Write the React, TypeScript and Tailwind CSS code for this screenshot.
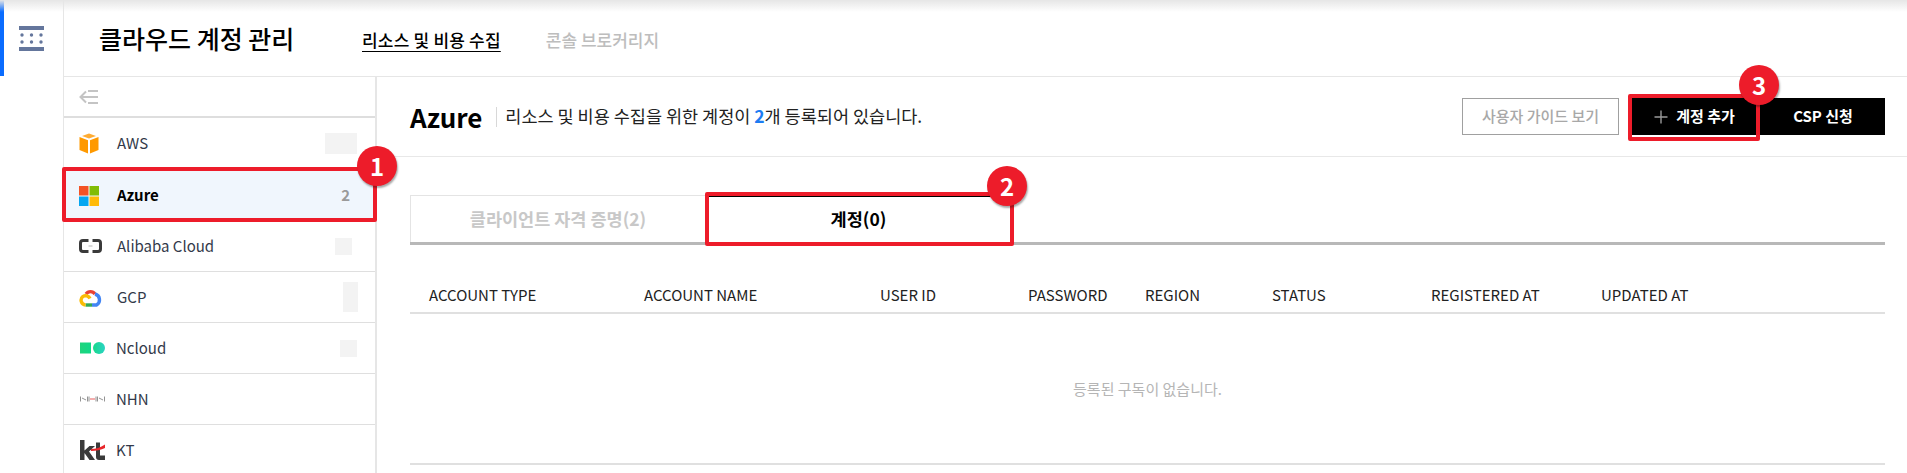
const PROVIDERS = [
  { key: "aws", label: "AWS", blur: "h-[21px] w-[32px] mr-[18px]", iconBox: "w-[38px]" },
  { key: "azure", label: "Azure", active: true, count: 2, iconBox: "w-[38px]" },
  { key: "alibaba", label: "Alibaba Cloud", blur: "h-[17px] w-[17px] mr-[23px]", iconBox: "w-[38px]" },
  { key: "gcp", label: "GCP", blur: "h-[30px] w-[15px] mr-[17px]", iconBox: "w-[38px]" },
  { key: "ncloud", label: "Ncloud", blur: "h-[17px] w-[17px] mr-[18px]", iconBox: "w-[37px] pl-px" },
  { key: "nhn", label: "NHN", iconBox: "w-[37px] pl-px" },
  { key: "kt", label: "KT", iconBox: "w-[37px] pl-px" },
];

const COLUMNS = [
  "ACCOUNT TYPE",
  "ACCOUNT NAME",
  "USER ID",
  "PASSWORD",
  "REGION",
  "STATUS",
  "REGISTERED AT",
  "UPDATED AT",
];

function ProviderIcon({ name }: { name: string }) {
  if (name === "aws") {
    return (
      <svg width="20" height="21" viewBox="0 0 20 21">
        <path d="M10 0.5 L17 3 L10 5.6 L3 3 Z" fill="#ffac33" />
        <path d="M0.5 4 L9 7.2 V20.5 L0.5 17 Z" fill="#ff9900" />
        <path d="M19.5 4 L11 7.2 V20.5 L19.5 17 Z" fill="#ff9900" />
      </svg>
    );
  }
  if (name === "azure") {
    return (
      <svg width="20" height="20" viewBox="0 0 20 20">
        <rect width="9.5" height="9.5" fill="#f35325" />
        <rect x="10.5" width="9.5" height="9.5" fill="#81bc06" />
        <rect y="10.5" width="9.5" height="9.5" fill="#05a6f0" />
        <rect x="10.5" y="10.5" width="9.5" height="9.5" fill="#ffba08" />
      </svg>
    );
  }
  if (name === "alibaba") {
    return (
      <svg width="23" height="14" viewBox="0 0 23 14" fill="none" stroke="#3a3a3a" strokeWidth="3">
        <path d="M9.5 1.5 H4 Q1.5 1.5 1.5 4 V10 Q1.5 12.5 4 12.5 H9.5" />
        <path d="M13.5 1.5 H19 Q21.5 1.5 21.5 4 V10 Q21.5 12.5 19 12.5 H13.5" />
        <path d="M9.5 7 H13.5" stroke="#b5b5b5" strokeWidth="1" />
      </svg>
    );
  }
  if (name === "gcp") {
    return (
      <svg width="23" height="19" viewBox="0 0 23 19" fill="none" strokeWidth="3.4">
        <path d="M7 6 A5.5 5.5 0 0 1 16 6" stroke="#ea4335" />
        <path d="M16 6 A6 6 0 0 1 17.5 17 H13" stroke="#4285f4" />
        <path d="M13 17 H6.5" stroke="#34a853" />
        <path d="M6.5 17 A4.8 4.8 0 0 1 4 8.4 A5 5 0 0 1 11 10.5" stroke="#fbbc05" />
      </svg>
    );
  }
  if (name === "ncloud") {
    return (
      <svg width="25" height="12" viewBox="0 0 25 12">
        <defs>
          <linearGradient id="ncloudSquare" x1="0" y1="0" x2="1" y2="0">
            <stop offset="0" stopColor="#1fd47c" />
            <stop offset="1" stopColor="#10d888" />
          </linearGradient>
          <linearGradient id="ncloudDot" x1="0" y1="0" x2="1" y2="0">
            <stop offset="0" stopColor="#17d98a" />
            <stop offset="1" stopColor="#2bd3c4" />
          </linearGradient>
        </defs>
        <rect y="0.5" width="11" height="11" fill="url(#ncloudSquare)" />
        <circle cx="19" cy="6" r="6" fill="url(#ncloudDot)" />
      </svg>
    );
  }
  if (name === "nhn") {
    return (
      <svg width="25" height="6" viewBox="0 0 25 6" fill="none" stroke="#777" strokeWidth="0.8">
        <path d="M0.5 0.5 V5.5 M7.5 0.5 V5.5 M2 2 L6 4" />
        <path d="M10 3 H15" stroke="#f08a8a" strokeWidth="1.4" />
        <path d="M9 0.5 V5.5 M16 0.5 V5.5" />
        <path d="M17.5 0.5 V5.5 M24.5 0.5 V5.5 M19 2 L23 4" />
      </svg>
    );
  }
  return (
    <svg width="25" height="20" viewBox="0 0 25 20">
      <path d="M0 0 H4.5 V10.5 L9.5 6 H15 L9 11.5 L15 20 H9.5 L4.5 13 V20 H0 Z" fill="#3a3a3a" />
      <path d="M16 2.5 H20 V15.5 H25 V20 H19 Q16 20 16 17 Z" fill="#3a3a3a" />
      <path d="M11 9 Q18 9 25 4.5 V8 Q19 11 11 11 Z" fill="#e8262a" />
    </svg>
  );
}

function Sidebar() {
  return (
    <aside className="w-[313px] shrink-0 border-r-2 border-[#e6e6e6]">
      <div className="flex h-[39px] items-center pl-[15px]">
        <svg width="20" height="16" viewBox="0 0 20 16" fill="none" stroke="#c4c4c4" strokeWidth="2">
          <path d="M19 8 H2 M7 2.5 L1.5 8 L7 13.5" />
          <path d="M9 2 H19 M9 14 H19" />
        </svg>
      </div>
      <div className="h-[2px] bg-[#dedede]" />
      <div>
        {PROVIDERS.map((p) => (
          <div
            key={p.key}
            className={
              p.active
                ? "flex h-[51px] items-center bg-[#f0f6fd] pl-[15px] text-[15px] font-bold text-black"
                : "flex h-[51px] items-center border-b border-[#dfdfdf] pl-[15px] text-[15px] text-[#333a4a] first:h-[52px] first:border-b-0 first:pb-[2px]"
            }
          >
            <div className={`flex shrink-0 items-center ${p.iconBox}`}>
              <ProviderIcon name={p.key} />
            </div>
            <span className="flex-1">{p.label}</span>
            {p.blur && <div className={`${p.blur} bg-[#f3f3f3]`} />}
            {p.count && <span className="mr-[25px] text-[15px] text-[#9a9a9a]">{p.count}</span>}
          </div>
        ))}
      </div>
    </aside>
  );
}

function Badge({ n, className }: { n: number; className: string }) {
  return (
    <div
      className={`absolute flex h-[40px] w-[40px] items-center justify-center rounded-full bg-[#ed1c2a] text-[24px] font-bold leading-none text-white shadow-[1px_2px_2px_rgba(0,0,0,0.35)] ${className}`}
    >
      {n}
    </div>
  );
}

export default function App() {
  return (
    <div className="relative flex h-[473px] w-[1907px] overflow-hidden bg-white font-['Noto_Sans_CJK_KR','Noto_Sans',sans-serif]">
      {/* top shadow */}
      <div className="pointer-events-none absolute inset-x-0 top-0 h-[12px] bg-gradient-to-b from-[#e6e6e6] to-transparent" />

      {/* rail */}
      <div className="w-[64px] shrink-0 border-r border-[#e6e6e6]">
        <div className="flex h-[76px] w-full border-l-4 border-[#0a6cff] pl-[15px] pt-[26px]">
          <svg width="25" height="25" viewBox="0 0 25 25" fill="#64769c">
            <rect width="25" height="4" />
            <rect y="21" width="25" height="4" />
            <circle cx="3" cy="9" r="1.7" />
            <circle cx="12.5" cy="9" r="1.7" />
            <circle cx="22" cy="9" r="1.7" />
            <circle cx="3" cy="16" r="1.7" />
            <circle cx="12.5" cy="16" r="1.7" />
            <circle cx="22" cy="16" r="1.7" />
          </svg>
        </div>
      </div>

      <div className="flex min-w-0 flex-1 flex-col">
        {/* title bar */}
        <header className="flex h-[77px] shrink-0 items-center border-b border-[#e6e6e6] pl-[35px]">
          <h1 className="w-[263px] text-[25px] font-medium leading-none text-black">클라우드 계정 관리</h1>
          <a className="pt-[3px] text-[17px] font-medium tracking-[0.2px] text-black underline underline-offset-4">리소스 및 비용 수집</a>
          <a className="ml-[45px] pt-[3px] text-[17px] font-medium text-[#bdbdbd]">콘솔 브로커리지</a>
        </header>

        <div className="flex min-h-0 flex-1">
          <Sidebar />

          <main className="min-w-0 flex-1 pr-[22px]">
            {/* section head */}
            <div className="-mr-[22px] flex h-[80px] items-center justify-between border-b border-[#e8e8e8] pl-[33px] pr-[22px]">
              <div className="flex items-center">
                <h2 className="text-[26px] font-bold leading-none text-black">Azure</h2>
                <div className="ml-[14px] mr-[8px] h-[20px] w-px bg-[#d8d8d8]" />
                <p className="text-[17.5px] text-[#222]">
                  리소스 및 비용 수집을 위한 계정이 <span className="font-bold text-[#1d7cf2]">2</span>개 등록되어 있습니다.
                </p>
              </div>
              <div className="flex">
                <button className="mr-[13px] h-[37px] w-[157px] border border-[#a0a0a0] text-[15px] font-medium text-[#a8a8a8]">
                  사용자 가이드 보기
                </button>
                <button className="flex h-[37px] w-[129px] items-center justify-center gap-[8px] bg-black pr-[4px] text-[15px] font-bold text-white">
                  <svg width="14" height="14" viewBox="0 0 14 14" stroke="#9a9a9a" strokeWidth="1.4">
                    <path d="M7 0.5 V13.5 M0.5 7 H13.5" />
                  </svg>
                  계정 추가
                </button>
                <button className="h-[37px] w-[124px] bg-black text-[15px] font-bold text-white">CSP 신청</button>
              </div>
            </div>

            {/* tabs */}
            <div className="ml-[33px] mt-[38px] flex h-[50px] border-b-[3px] border-[#b8b8b8]">
              <button className="w-[296px] border-l border-r border-t border-[#e4e4e4] text-[17.5px] font-bold text-[#c8c8c8]">
                클라이언트 자격 증명(2)
              </button>
              <button className="w-[306px] border-r border-t-2 border-[#b8b8b8] border-t-black text-[17.5px] font-bold text-black">
                계정(0)
              </button>
            </div>

            {/* table */}
            <div className="ml-[33px]">
              <div className="grid h-[69px] grid-cols-[215px_236px_148px_117px_127px_159px_170px_1fr] items-end border-b-2 border-[#e0e0e0] pb-[6px] pl-[19px] text-[15px] text-[#222]">
                {COLUMNS.map((c) => (
                  <div key={c}>{c}</div>
                ))}
              </div>
              <div className="flex h-[151px] items-center justify-center border-b-2 border-[#e0e0e0] pt-[2px] text-[15px] text-[#b5b5b5]">
                등록된 구독이 없습니다.
              </div>
            </div>
          </main>
        </div>
      </div>

      {/* callouts */}
      <div className="absolute left-[62px] top-[167px] h-[55px] w-[315px] rounded-[2px] border-[4px] border-[#ed1c2a]" />
      <div className="absolute left-[705px] top-[192px] h-[54px] w-[309px] rounded-[2px] border-[4px] border-[#ed1c2a]" />
      <div className="absolute left-[1628px] top-[94px] h-[47px] w-[132px] rounded-[2px] border-[4px] border-[#ed1c2a]" />
      <Badge n={1} className="left-[357px] top-[146px]" />
      <Badge n={2} className="left-[987px] top-[166px]" />
      <Badge n={3} className="left-[1739px] top-[65px]" />
    </div>
  );
}
